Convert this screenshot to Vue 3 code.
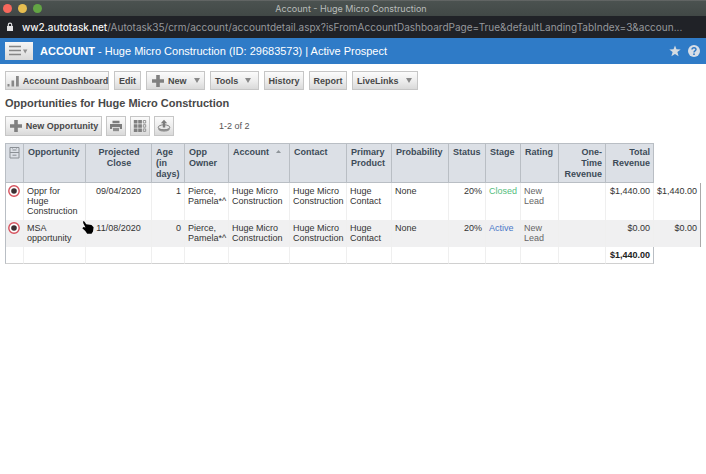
<script setup>
const menus = [
  { label: 'Account Dashboard', icon: 'bars', size: 'dash' },
  { label: 'Edit', size: 'edit' },
  { label: 'New', icon: 'plus', arrow: true, size: 'new' },
  { label: 'Tools', arrow: true, size: 'tools' },
  { label: 'History', size: 'history' },
  { label: 'Report', size: 'report' },
  { label: 'LiveLinks', arrow: true, size: 'links' },
]

const columns = [
  { key: 'name', label: 'Opportunity' },
  { key: 'close', label: 'Projected Close', align: 'center' },
  { key: 'age', label: 'Age (in days)', cell: 'right' },
  { key: 'owner', label: 'Opp Owner' },
  { key: 'account', label: 'Account', sorted: true },
  { key: 'contact', label: 'Contact' },
  { key: 'product', label: 'Primary Product' },
  { key: 'probability', label: 'Probability' },
  { key: 'status', label: 'Status', cell: 'right' },
  { key: 'stage', label: 'Stage' },
  { key: 'rating', label: 'Rating' },
  { key: 'oneTime', label: 'One-Time Revenue', align: 'right' },
  { key: 'total', label: 'Total Revenue', align: 'right' },
]

const shared = {
  owner: 'Pierce, Pamela*^',
  account: 'Huge Micro Construction',
  contact: 'Huge Micro Construction',
  product: 'Huge Contact',
  probability: 'None',
  status: '20%',
  rating: 'New Lead',
  oneTime: '',
}

const rows = [
  { ...shared, name: 'Oppr for Huge Construction', close: '09/04/2020', age: '1', stage: 'Closed', total: '$1,440.00' },
  { ...shared, name: 'MSA opportunity', close: '11/08/2020', age: '0', stage: 'Active', total: '$0.00' },
]
</script>

<template>
  <div class="window">
    <header class="titlebar">
      <div class="lights"><i class="red"></i><i class="yellow"></i><i class="green"></i></div>
      <div class="wintitle">Account - Huge Micro Construction</div>
    </header>

    <div class="urlbar">
      <svg class="lock" viewBox="0 0 8 10"><path d="M1 4h6v5H1z" fill="#e4e4e6" /><path d="M2.3 4.4V2.8a1.7 1.7 0 0 1 3.4 0v1.6" fill="none" stroke="#e4e4e6" stroke-width="1.1" /></svg>
      <div class="url"><span class="host">ww2.autotask.net</span>/Autotask35/crm/account/accountdetail.aspx?isFromAccountDashboardPage=True&amp;defaultLandingTabIndex=3&amp;accoun...</div>
    </div>

    <div class="banner">
      <button class="menu" aria-label="Menu">
        <svg viewBox="0 0 20 12"><path d="M0 1.5h12M0 5.5h12M0 9.5h12" stroke="#858585" stroke-width="1.6" /><path d="M14 4.500h4.400l-2.200 4z" fill="#909090" /></svg>
      </button>
      <h1><b>ACCOUNT</b> - Huge Micro Construction (ID: 29683573) | Active Prospect</h1>
      <button class="plain" aria-label="Favorite">
        <svg viewBox="0 0 12 12"><path d="M6 .4 7.5 4.3l4.2.2-3.3 2.6 1.2 4.1L6 8.9l-3.6 2.3 1.2-4.1L.3 4.5l4.2-.2z" fill="#d5dbe1" /></svg>
      </button>
      <button class="plain" aria-label="Help">
        <svg viewBox="0 0 12 12"><circle cx="6" cy="6" r="6" fill="#d8dee6" /><path d="M4 4.6C4 2.2 8 2.2 8 4.6 8 6 6 5.9 6 7.4" fill="none" stroke="#2e79c6" stroke-width="1.4" /><circle cx="6" cy="9.2" r=".9" fill="#2e79c6" /></svg>
      </button>
    </div>

    <main>
      <nav class="toolbar">
        <button v-for="m in menus" :key="m.label" class="btn" :class="[m.size, { drop: m.arrow }]">
          <svg v-if="m.icon === 'bars'" class="icon" viewBox="0 0 14 14"><path d="M1.500 10h2v2.500h-2zM5.500 6.500h2.600v6H5.500zM10 2h2.800v10.500H10z" fill="#888" /></svg>
          <svg v-if="m.icon === 'plus'" class="icon" viewBox="0 0 14 14"><path d="M5.200 1h3.600v4.200H13v3.600H8.800V13H5.200V8.800H1V5.200h4.200z" fill="#808080" /></svg>
          <span>{{ m.label }}</span>
          <svg v-if="m.arrow" class="arrow" viewBox="0 0 6 5"><path d="M0 0h6L3 5z" fill="#888" /></svg>
        </button>
      </nav>

      <h2>Opportunities for Huge Micro Construction</h2>

      <div class="actions">
        <button class="btn create">
          <svg class="icon" viewBox="0 0 14 14"><path d="M5.200 1h3.600v4.200H13v3.600H8.800V13H5.200V8.800H1V5.200h4.200z" fill="#808080" /></svg>
          <span>New Opportunity</span>
        </button>
        <button class="btn square" aria-label="Print">
          <svg class="icon" viewBox="0 0 14 14"><path d="M3.500 1.800h7v2.400h-7zM1 5h12v5h-2.200V8H3.200v2H1z" fill="#7c7c7c" /><path d="M4 8.800h6v3.400H4z" fill="#8d8d8d" /></svg>
        </button>
        <button class="btn square" aria-label="Choose columns">
          <svg class="icon" viewBox="0 0 14 14"><path d="M.800 1h3.700v3.500H.8zM5.200 1h3.700v3.500H5.200zM.8 5.200h3.700v3.500H.8zM5.200 5.200h3.700v3.500H5.200zM.8 9.400h3.700v3.500H.8zM5.200 9.400h3.700v3.500H5.200z" fill="#808080" /><path d="M10.300 1.500h2.400v2.500h-2.400zM10.300 5.700h2.400v2.500h-2.400zM10.300 9.900h2.400v2.500h-2.400z" fill="none" stroke="#8c8c8c" stroke-width=".9" /></svg>
        </button>
        <button class="btn square" aria-label="Export">
          <svg class="icon" viewBox="0 0 14 14"><path d="M1.200 8.500v1.600c0 3.400 11.600 3.400 11.600 0V8.500" fill="#959595" /><ellipse cx="7" cy="8.300" rx="5.800" ry="2.500" fill="#e8e8e8" stroke="#808080" /><path d="M7 .8l3.200 3.400H8.200v4.300H5.800V4.200H3.800z" fill="#7c7c7c" /></svg>
        </button>
        <span class="count">1-2 of 2</span>
      </div>

      <table>
        <colgroup>
          <col class="w-icon"><col v-for="c in columns" :key="c.key" :class="'w-' + c.key"><col class="w-extra">
        </colgroup>
        <thead>
          <tr>
            <th class="mark"><svg class="sheet" viewBox="0 0 11 13"><path d="M1 1.500h9v10.500H1zM1 6.500h9" fill="none" stroke="#8a8f94" /><path d="M3.500 4h4M3.500 9.200h4M3.500 1.500v1M7.500 1.500v1" stroke="#8a8f94" /></svg></th>
            <th v-for="c in columns" :key="c.key" :class="c.align">{{ c.label }}<svg v-if="c.sorted" class="sort" viewBox="0 0 5 3"><path d="M0 3h5L2.500 0z" fill="#8e9499" /></svg></th>
            <td class="void"></td>
          </tr>
        </thead>
        <tbody>
          <tr v-for="r in rows" :key="r.name">
            <td class="mark">
              <button class="target" :aria-label="'Open ' + r.name"><svg viewBox="0 0 12 12"><circle cx="6" cy="6" r="5.200" fill="#fff" stroke="#d5505c" stroke-width="1.400" /><circle cx="6" cy="6" r="2.800" fill="#3a3033" /></svg></button>
            </td>
            <td v-for="c in columns" :key="c.key" :class="[c.align || c.cell, c.key === 'stage' ? r.stage.toLowerCase() : c.key]">{{ r[c.key] }}</td>
            <td class="right last">{{ r.total }}</td>
          </tr>
        </tbody>
        <tfoot>
          <tr>
            <td></td>
            <td v-for="c in columns" :key="c.key" :class="c.align">{{ c.key === 'total' ? '$1,440.00' : '' }}</td>
            <td class="void"></td>
          </tr>
        </tfoot>
      </table>
    </main>

    <svg class="pointer" viewBox="0 0 12 13"><path d="M1 .3C2.300-.3 3.200 1.400 4.200 3.200L9.500 4 11.600 6.200 11 10.500 9.500 12.700H5.200L3.300 10 .3 7.300 1.500 6 3.500 6.500 1.300 2.300z" fill="#000" /></svg>
  </div>
</template>

<style>
body { margin: 0; background: #fff; }
</style>

<style scoped>
* { box-sizing: border-box; }
.window { position: relative; font-family: "Liberation Sans", Arial, sans-serif; font-size: 9px; color: #333; }
button { font: inherit; color: inherit; padding: 0; border: 0; background: none; }
svg { display: block; }

.titlebar { display: grid; grid-template-columns: 50px 1fr 54px; align-items: center; height: 16px; background: linear-gradient(#777 0, #4b5250 1px, #414846); }
.lights { display: flex; gap: 6px; padding-left: 3px; }
.lights i { width: 9px; height: 9px; border-radius: 50%; }
.red { background: #f7685c; }
.yellow { background: #e6bd50; }
.green { background: #63a544; }
.wintitle { padding-top: 2px; text-align: center; font-family: Inter, sans-serif; font-size: 9px; line-height: 14px; color: #b9bdbb; }

.urlbar { display: flex; align-items: center; gap: 8px; height: 22px; padding: 0 8px 0 6px; background: #202227; }
.lock { width: 8px; height: 10px; flex: none; }
.url { flex: 1; min-width: 0; overflow: hidden; text-overflow: ellipsis; white-space: nowrap; font-family: Inter, sans-serif; font-size: 10px; line-height: 22px; color: #96989c; }
.host { color: #f2f2f3; font-weight: 500; }

.banner { display: flex; align-items: center; gap: 7px; height: 26px; padding: 0 6px 0 5px; background: #2f7bc7; }
.menu { display: flex; align-items: center; justify-content: center; width: 28px; height: 18px; background: linear-gradient(#f6f6f6, #d9d9d9); }
.menu svg { width: 20px; height: 12px; }
.banner h1 { flex: 1; margin: 0; font-size: 11px; font-weight: 400; color: #fff; }
.plain svg { width: 12px; height: 12px; }

main { padding: 7px 5px 0; }
.toolbar { display: flex; gap: 5px; }
.btn { display: flex; align-items: center; justify-content: center; gap: 3px; height: 19px; border: 1px solid #c6c6c6; background: linear-gradient(#fbfbfb, #ececec 55%, #d9d9d9); font-weight: 700; color: #484848; white-space: nowrap; }
.drop { justify-content: flex-start; padding-left: 4px; }
.icon { width: 14px; height: 14px; flex: none; }
.arrow { width: 6px; height: 5px; margin-left: 4px; }
.dash { width: 104px; }
.edit { width: 27px; }
.new { width: 59px; }
.tools { width: 49px; }
.history { width: 40px; }
.report { width: 38px; }
.links { width: 66px; }
h2 { margin: 7px 0 6px; font-size: 11px; line-height: 13px; color: #484848; }
.actions { display: flex; align-items: center; gap: 4px; margin-bottom: 7px; }
.actions .btn { height: 20px; }
.create { width: 97px; }
.square { width: 20px; }
.count { margin-left: 41px; color: #555; }

table { width: 100%; table-layout: fixed; border-collapse: separate; border-spacing: 0; line-height: 10px; }
.w-icon { width: 19px; }
.w-name { width: 62px; }
.w-close { width: 66px; }
.w-age { width: 33px; }
.w-owner { width: 44px; }
.w-account { width: 61px; }
.w-contact { width: 57px; }
.w-product { width: 45px; }
.w-probability { width: 57px; }
.w-status { width: 37px; }
.w-stage { width: 35px; }
.w-rating { width: 38px; }
.w-oneTime { width: 47px; }
.w-total { width: 48px; }
.w-extra { width: 47px; }
th { height: 40px; padding: 3px 3px 2px 4px; border: solid #b9bec4; border-width: 1px 1px 1px 0; background: #dce0e6; font-weight: 700; line-height: 11px; text-align: left; vertical-align: top; color: #3c4b58; }
td { padding: 3px 3px 4px; border-right: 1px solid #efefef; text-align: left; vertical-align: top; }
tr > :first-child { border-left: 1px solid #b9bec4; }
tbody tr:first-child { height: 37px; }
tbody tr:nth-child(2) { height: 27px; background: #f0f0f1; }
tfoot td { height: 17px; padding: 3px; border-bottom: 1px solid #d0d0d0; font-weight: 700; color: #222; }
tfoot td:nth-last-child(2) { border-right-color: #b9bec4; }
.center { text-align: center; }
.right { text-align: right; }
td.void { border: 0; background: #fff; }
.last { border-right-color: #aaa; }
.mark { padding: 2px 2px 2px 1px; }
.sheet { width: 11px; height: 13px; margin: 0 auto; }
.target { display: block; width: 12px; height: 12px; margin: 0 auto; }
.sort { display: inline-block; width: 5px; height: 3px; margin: 0 0 2px 7px; }
.closed { color: #55bd7d; }
.active { color: #4a78c8; }
.rating { color: #666; }
.pointer { position: absolute; left: 82px; top: 221px; width: 12px; height: 13px; }
</style>
